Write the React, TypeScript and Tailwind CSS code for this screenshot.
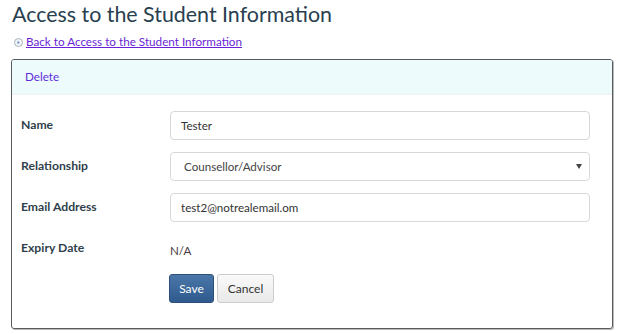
import React from "react";

function Field(props: { label: string; children: React.ReactNode }) {
  return (
    <div className="flex items-center h-[41px]">
      <div className="w-[149px] shrink-0 text-[12.2px] font-bold text-[#2f3f4c]">
        {props.label}
      </div>
      <div className="flex-1 pr-[22px]">{props.children}</div>
    </div>
  );
}

export default function App() {
  return (
    <div className="w-[624px] h-[334px] bg-white font-['Lato',sans-serif] px-[11px] overflow-hidden">
      <h1 className="text-[21.4px] leading-[28px] text-[#28404f] pl-[1px]">
        Access to the Student Information
      </h1>
      <div className="flex items-center gap-[3px] pl-[3px] mt-[6px] h-[16px]">
        <svg width="9" height="9" viewBox="0 0 9 9">
          <circle cx="4.5" cy="4.5" r="4" fill="#f4f6f8" stroke="#a9b3bb" />
          <path d="M3.5 2.8 L5.8 4.5 L3.5 6.2 Z" fill="#5a8fc0" />
        </svg>
        <a href="#" className="text-[11.7px] text-[#6b1fd6] underline">
          Back to Access to the Student Information
        </a>
      </div>
      <div className="mt-[9px] h-[270px] border border-[#5a5a5a] rounded-[3px] shadow-[1px_1px_0_#bbb] overflow-hidden">
        <div className="h-[35px] bg-[#eefbfd] border-b border-[#f0f3f3] flex items-center pl-[13px]">
          <span className="text-[11.7px] text-[#5f2fd9]">Delete</span>
        </div>
        <div className="pl-[9px] pt-[10px]">
          <Field label="Name">
            <div className="h-[29px] border border-[#d6d9dc] rounded-[4px] flex items-center px-[10px] text-[11.6px] text-[#333]">
              Tester
            </div>
          </Field>
          <Field label="Relationship">
            <div className="h-[29px] border border-[#d6d9dc] rounded-[4px] flex items-center justify-between pl-[13px] pr-[7px] text-[11.6px] text-[#444]">
              <span>Counsellor/Advisor</span>
              <svg width="6" height="5" viewBox="0 0 6 5">
                <path d="M0 0 H6 L3 5 Z" fill="#444" />
              </svg>
            </div>
          </Field>
          <Field label="Email Address">
            <div className="h-[29px] border border-[#d6d9dc] rounded-[4px] flex items-center px-[10px] text-[11.6px] text-[#333]">
              test2@notrealemail.om
            </div>
          </Field>
          <Field label="Expiry Date">
            <span className="text-[11.6px] text-[#4a3a44]">N/A</span>
          </Field>
          <div className="flex gap-[3px] pl-[148px] mt-[5px]">
            <button className="h-[29px] w-[45px] rounded-[3px] border border-[#2c4f7c] bg-gradient-to-b from-[#4a76a8] to-[#2e5a8e] text-white text-[12px]">
              Save
            </button>
            <button className="h-[29px] w-[57px] rounded-[3px] border border-[#ccc] bg-gradient-to-b from-[#fafafa] to-[#e9e9e9] text-[#333] text-[12px]">
              Cancel
            </button>
          </div>
        </div>
      </div>
    </div>
  );
}
